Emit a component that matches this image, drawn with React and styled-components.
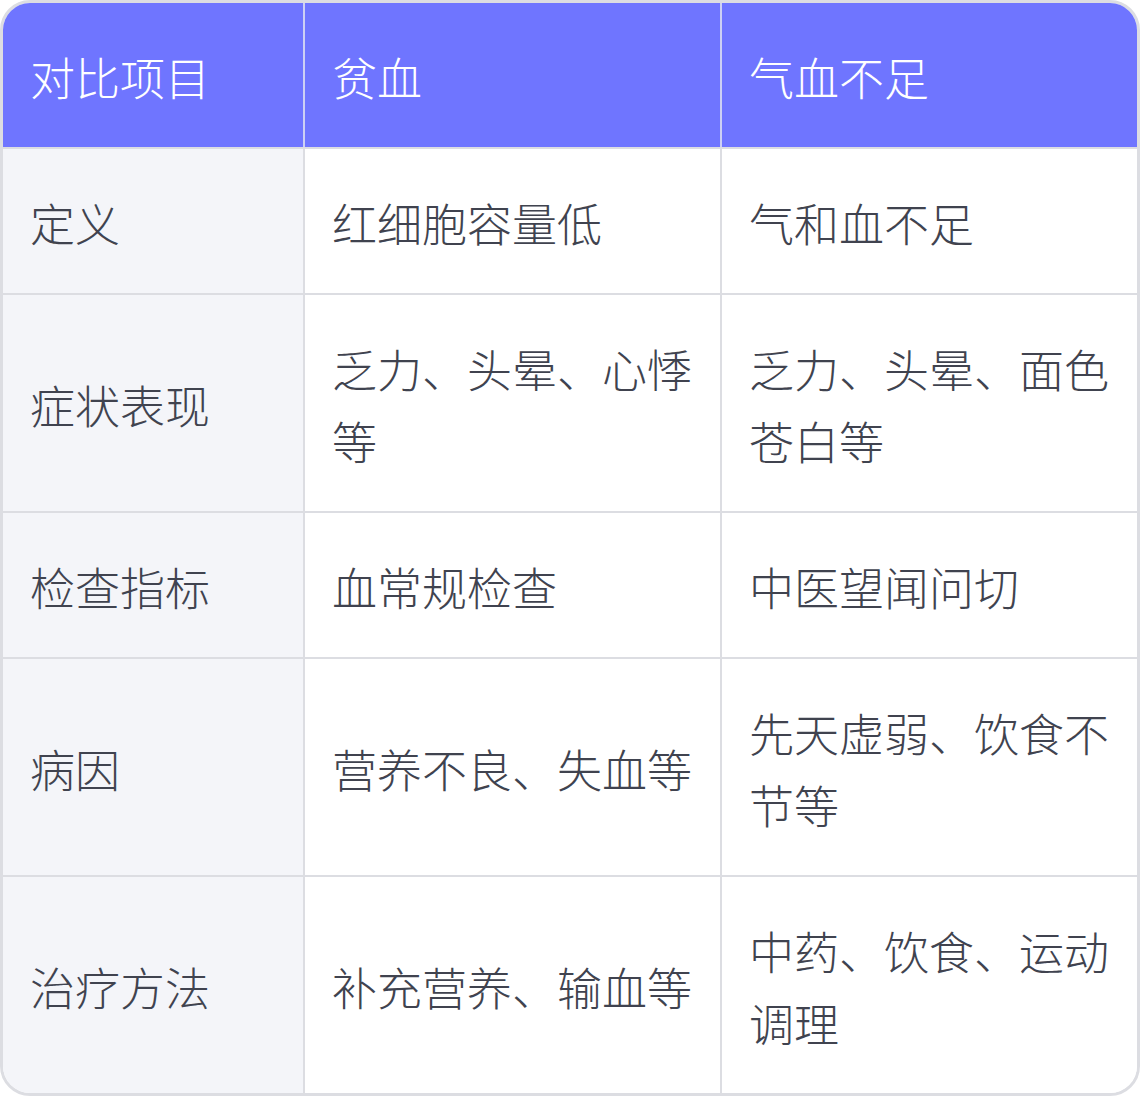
import React from "react"
import styled, { createGlobalStyle } from 'styled-components'

const GlobalStyle = createGlobalStyle`
    html, body {
        margin: 0;
        padding: 0;
        background: #ffffff;
    }
    body {
        font-family: "Noto Sans CJK SC", "Noto Sans", sans-serif;
    }
`

const TableWrap = styled.div`
    width: 1140px;
    box-sizing: border-box;
    border: 3px solid #dcdde2;
    border-radius: 30px;
    overflow: hidden;
`

const Table = styled.table`
    width: 100%;
    border-collapse: collapse;
    table-layout: fixed;
    font-size: 45px;
    line-height: 72px;
    font-weight: 300;
    color: #40434f;
`

const HeadCell = styled.th`
    background: #6f75ff;
    color: #ffffff;
    font-weight: 300;
    text-align: left;
    vertical-align: middle;
    padding: 38px 27px 34px;
    border-left: 2px solid #cdd0f4;
    border-bottom: 2px solid #dcdde2;
    &:first-child {
        border-left: none;
    }
`

const Cell = styled.td`
    background: ${props => props.$label ? '#f4f5f9' : '#ffffff'};
    vertical-align: middle;
    padding: 38px 27px 34px;
    border-left: 2px solid #dcdde2;
    border-top: 2px solid #dcdde2;
    &:first-child {
        border-left: none;
    }
`

const Row = styled.tr`
    &:first-child td {
        border-top: none;
    }
`

const columns = ['对比项目', '贫血', '气血不足']

const rows = [
    ['定义', '红细胞容量低', '气和血不足'],
    ['症状表现', '乏力、头晕、心悸等', '乏力、头晕、面色苍白等'],
    ['检查指标', '血常规检查', '中医望闻问切'],
    ['病因', '营养不良、失血等', '先天虚弱、饮食不节等'],
    ['治疗方法', '补充营养、输血等', '中药、饮食、运动调理'],
]

const App = () => {
    return (
        <>
            <GlobalStyle />
            <TableWrap>
                <Table>
                    <colgroup>
                        <col style={{ width: '301px' }} />
                        <col style={{ width: '417px' }} />
                        <col style={{ width: '416px' }} />
                    </colgroup>
                    <thead>
                        <tr>
                            {columns.map(c => <HeadCell key={c}>{c}</HeadCell>)}
                        </tr>
                    </thead>
                    <tbody>
                        {rows.map(r => (
                            <Row key={r[0]}>
                                <Cell $label>{r[0]}</Cell>
                                <Cell>{r[1]}</Cell>
                                <Cell>{r[2]}</Cell>
                            </Row>
                        ))}
                    </tbody>
                </Table>
            </TableWrap>
        </>
    )
}

export default App
